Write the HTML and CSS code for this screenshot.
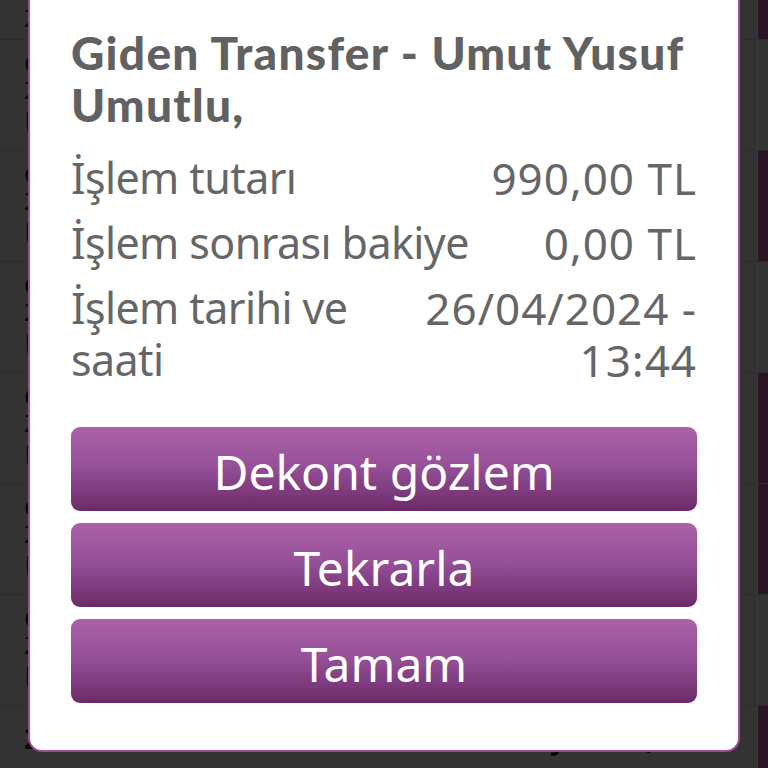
FILE: index.html
```html
<!DOCTYPE html>
<html lang="tr">
<head>
<meta charset="utf-8">
<title>Giden Transfer</title>
<link rel="stylesheet" href="styles.css">
</head>
<body>
<div class="screen">
  <ul class="list">
    <li class="row row-top accent"><div class="row-body"><span class="l2">26.04.2024</span></div><span class="bar"></span></li>
    <li class="row"><div class="row-body"><span class="l1">Giden Transfer</span><span class="l2">26.04.2024</span><span class="l3">Umut Yusuf Umutlu</span></div><span class="bar"></span></li>
    <li class="row accent"><div class="row-body"><span class="l1">Giden Transfer</span><span class="l2">26.04.2024</span><span class="l3">Umut Yusuf Umutlu</span></div><span class="bar"></span></li>
    <li class="row"><div class="row-body"><span class="l1">Gelen Transfer</span><span class="l2">25.04.2024</span><span class="l3">Umut Yusuf Umutlu</span></div><span class="bar"></span></li>
    <li class="row accent"><div class="row-body"><span class="l1">Giden Transfer</span><span class="l2">25.04.2024</span><span class="l3">Umut Yusuf Umutlu</span></div><span class="bar"></span></li>
    <li class="row accent"><div class="row-body"><span class="l1">Giden Transfer</span><span class="l2">24.04.2024</span><span class="l3">Umut Yusuf Umutlu</span></div><span class="bar"></span></li>
    <li class="row"><div class="row-body"><span class="l1">Gelen Transfer</span><span class="l2">24.04.2024</span><span class="l3">Umut Yusuf Umutlu</span></div><span class="bar"></span></li>
    <li class="row row-last accent"><div class="row-pair"><span class="left">23.04.2024 - 18:20</span><span class="right">Bakiye: 990,00 TL</span></div><span class="bar"></span></li>
  </ul>

  <div class="dialog">
    <h1 class="title">Giden Transfer - Umut Yusuf Umutlu,</h1>
    <div class="details">
      <div class="detail">
        <span class="label">İşlem tutarı</span>
        <span class="value">990,00 TL</span>
      </div>
      <div class="detail">
        <span class="label">İşlem sonrası bakiye</span>
        <span class="value">0,00 TL</span>
      </div>
      <div class="detail">
        <span class="label">İşlem tarihi ve saati</span>
        <span class="value">26/04/2024 - 13:44</span>
      </div>
    </div>
    <div class="actions">
      <button class="btn">Dekont gözlem</button>
      <button class="btn">Tekrarla</button>
      <button class="btn">Tamam</button>
    </div>
  </div>
</div>
</body>
</html>
```
FILE: styles.css
```css
* { box-sizing: border-box; }
html, body { margin: 0; padding: 0; }
body {
  background: #333333;
  font-family: "Noto Sans", "Open Sans", sans-serif;
  width: 768px;
  height: 768px;
  overflow: hidden;
}
.screen {
  position: relative;
  width: 768px;
  height: 768px;
  overflow: hidden;
  background: #333333;
}
.list {
  list-style: none;
  margin: 0;
  padding: 0;
  display: flex;
  flex-direction: column;
}
.row {
  display: flex;
  height: 111px;
  border-bottom: 1px solid #2c2c2c;
}
.row-top { height: 40px; }
.row-body {
  flex: 1;
  display: flex;
  flex-direction: column;
  padding: 10px 0 0 24px;
  color: #050505;
  font-size: 26px;
  line-height: 26px;
  white-space: nowrap;
}
.row-top .row-body { padding-top: 4px; }
.row-body .l3 { font-size: 34px; line-height: 44px; }
.row-pair {
  flex: 1;
  display: flex;
  justify-content: space-between;
  padding: 17px 32px 0 24px;
  color: #050505;
  font-size: 28px;
  line-height: 30px;
  font-weight: 700;
  white-space: nowrap;
}
.bar {
  width: 11px;
  border-left: 1px solid #3a3a3a;
}
.accent .bar { background: #2a1525; }

.dialog {
  position: absolute;
  left: 28px;
  right: 28px;
  bottom: 16px;
  background: #ffffff;
  border: 2px solid #9c4f97;
  border-radius: 14px;
  padding: 60px 41px 47px 41px;
  color: #666666;
}
.title {
  margin: 0 0 21px 0;
  font-family: "Lato", "Open Sans", sans-serif;
  font-weight: 900;
  font-size: 46px;
  letter-spacing: 1.3px;
  line-height: 52px;
  color: #616161;
}
.details {
  display: flex;
  flex-direction: column;
  gap: 13px;
}
.detail {
  display: flex;
  justify-content: space-between;
  line-height: 52px;
}
.label {
  flex: 1 1 auto;
  font-size: 43px;
  letter-spacing: -0.6px;
}
.value {
  flex: 1 1 auto;
  text-align: right;
  font-size: 44px;
  letter-spacing: 1px;
}
.actions {
  margin-top: 41px;
  display: flex;
  flex-direction: column;
  gap: 12px;
}
.btn {
  height: 84px;
  border: none;
  border-radius: 9px;
  background: linear-gradient(180deg, #ab62a6 0%, #96519a 45%, #6c2a68 100%);
  color: #ffffff;
  font-family: "Noto Sans", "Open Sans", sans-serif;
  font-size: 48px;
  line-height: 60px;
  padding: 6px 0 0 0;
  display: flex;
  align-items: center;
  justify-content: center;
}
```
